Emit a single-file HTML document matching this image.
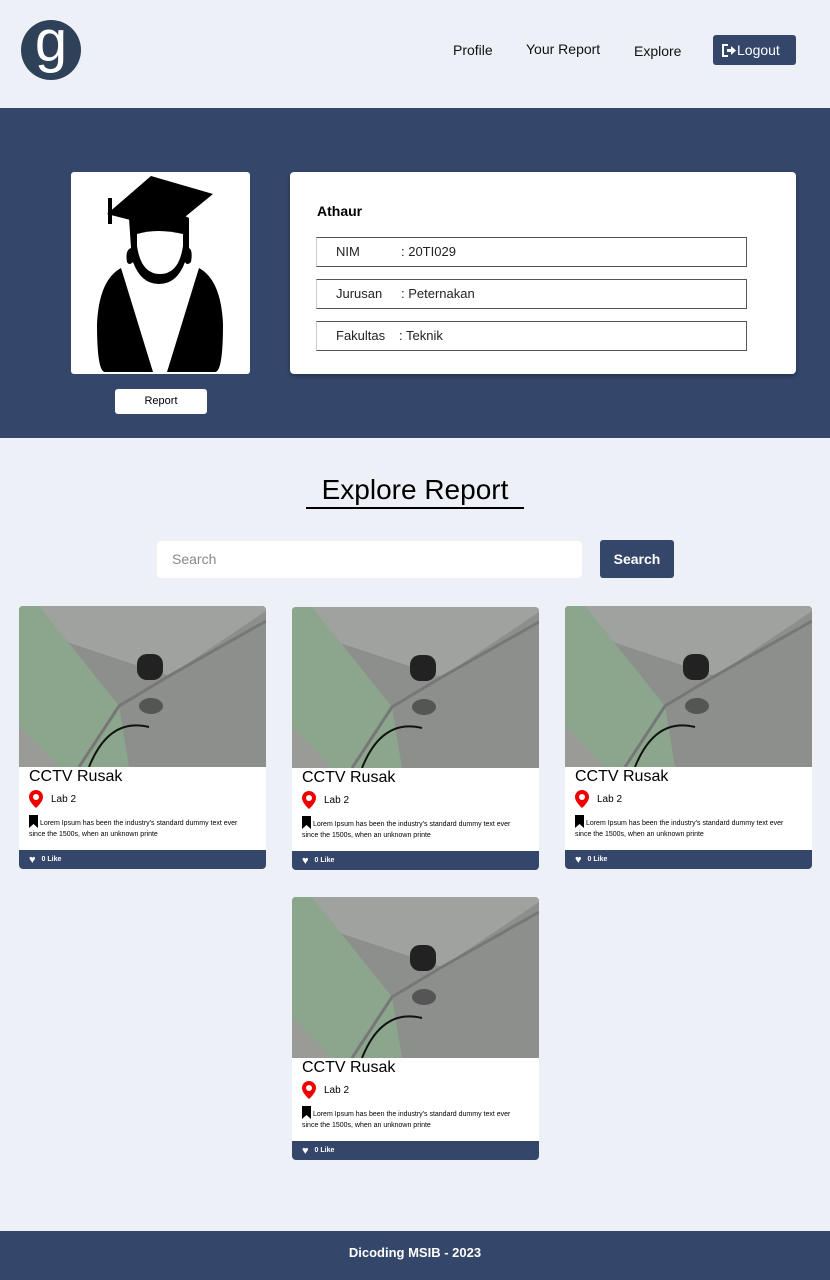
<!DOCTYPE html>
<html><head><meta charset="utf-8"><style>
*{box-sizing:border-box;margin:0;padding:0}
body{width:830px;height:1280px;background:#edf0f6;font-family:"Liberation Sans",sans-serif;position:relative;overflow:hidden;color:#000}
.abs{position:absolute}
.nav a{position:absolute;font-size:14px;color:#111;top:42px}
.card{position:absolute;width:247px;height:263px;background:#fff;border-radius:4px;overflow:hidden}
.card .img{height:161px;display:block}
.card h3{position:absolute;left:10px;top:162px;font-size:16px;font-weight:normal}
.card .loc{position:absolute;left:10px;top:184px;font-size:10px;display:flex;align-items:center;gap:8px}
.card .desc{position:absolute;left:10px;top:209px;font-size:7px;line-height:11px;width:222px}
.card .foot{position:absolute;left:0;bottom:0;width:100%;height:19px;background:#34466a;color:#fff;font-size:7px;font-weight:bold;display:flex;align-items:center;padding-left:10px;gap:6px}
.field{position:absolute;left:316px;width:431px;height:30px;border:1px solid #555;border-left:1px solid #ccc;font-size:13px;color:#222;line-height:28px}
</style></head><body>
<div class="abs" style="left:21px;top:20px;width:60px;height:60px;border-radius:50%;background:#2f4159;color:#fff;font-size:58px;text-align:center;line-height:44px">g</div>
<div class="nav"><a style="left:453px">Profile</a><a style="left:526px;top:41px">Your Report</a><a style="left:634px;top:43px">Explore</a></div>
<div class="abs" style="left:713px;top:35px;width:83px;height:30px;background:#34466a;border-radius:3px;color:#fff;font-size:14px;line-height:30px;padding-left:9px">
<svg width="15" height="13" viewBox="0 0 15 13" style="vertical-align:-2px"><path d="M6 1H1v11h5" stroke="#fff" stroke-width="2" fill="none"/><path d="M5 5h4V2l5 4.5-5 4.5V8H5z" fill="#fff"/></svg>Logout</div>

<div class="abs" style="left:0;top:108px;width:830px;height:330px;background:#34466a"></div>
<div class="abs" style="left:71px;top:172px;width:179px;height:202px;background:#fff;border-radius:3px">
<svg width="179" height="202" viewBox="0 0 179 202">
<path d="M36 42L80 4 142 22 98 58z" fill="#000"/><rect x="37" y="26" width="4" height="26" fill="#000"/>
<path d="M58 46q30-16 60 0v30q4 2 2 14q-4 4-6 0q-8 22-26 22q-18 0-26-22q-4 4-6 0q-2-12 4-14z" fill="#000"/>
<path d="M66 62q20-6 46 0v12q-4 28-23 28q-19 0-23-28z" fill="#fff"/>
<path d="M50 96q-22 12-24 56 0 48 8 48h110q8 0 8-48q-2-44-24-56l-32 104h-14z" fill="#000"/>
</svg></div>
<div class="abs" style="left:115px;top:389px;width:92px;height:25px;background:#fff;border-radius:3px;font-size:11px;text-align:center;line-height:25px">Report</div>
<div class="abs" style="left:290px;top:172px;width:506px;height:202px;background:#fff;border-radius:4px;box-shadow:0 2px 4px rgba(0,0,0,.3)"></div>
<div class="abs" style="left:317px;top:203px;font-size:14px;font-weight:bold">Athaur</div>
<div class="field" style="top:237px"><span style="margin-left:19px">NIM</span><span class="abs" style="left:84px">: 20TI029</span></div>
<div class="field" style="top:279px"><span style="margin-left:19px">Jurusan</span><span class="abs" style="left:84px">: Peternakan</span></div>
<div class="field" style="top:321px"><span style="margin-left:19px">Fakultas</span><span class="abs" style="left:82px">: Teknik</span></div>

<div class="abs" style="left:0;top:474px;width:830px;text-align:center;font-size:28px">Explore Report</div>
<div class="abs" style="left:306px;top:507px;width:218px;height:2px;background:#000"></div>
<div class="abs" style="left:157px;top:541px;width:425px;height:37px;background:#fff;border-radius:4px;font-size:14px;color:#888;line-height:37px;padding-left:15px">Search</div>
<div class="abs" style="left:600px;top:540px;width:74px;height:38px;background:#34466a;border-radius:3px;color:#fff;font-size:14px;font-weight:bold;text-align:center;line-height:38px">Search</div>

<svg width="0" height="0" style="position:absolute"><defs>
<g id="im"><rect width="247" height="161" fill="#8d8f8c"/><path d="M0 0H247V5L150 70 0 20z" fill="#a0a2a0"/>
<path d="M0 0H20L100 100 110 161H0z" fill="#8ca58d"/><path d="M0 120L40 161H0z" fill="#9a9a96"/>
<path d="M60 161L100 100 150 70 247 15" stroke="#777" stroke-width="3" fill="none"/>
<rect x="118" y="48" width="26" height="26" rx="10" fill="#222"/><ellipse cx="132" cy="100" rx="12" ry="8" fill="#555"/>
<path d="M70 161q20-50 60-40" stroke="#111" stroke-width="2" fill="none"/></g>
<g id="pin"><path d="M7 0a7 7 0 0 1 7 7c0 5-7 11-7 11S0 12 0 7a7 7 0 0 1 7-7z" fill="#e00"/><circle cx="7" cy="7" r="3" fill="#fff"/></g>
</defs></svg>

<div class="card" style="left:19px;top:606px"><svg class="img" width="247" height="161"><use href="#im"/></svg><h3>CCTV Rusak</h3><div class="loc"><svg width="14" height="18"><use href="#pin"/></svg>Lab 2</div><div class="desc"><svg width="9" height="13" style="vertical-align:-3px"><path d="M0 0h9v13l-4.5-4L0 13z"/></svg> Lorem Ipsum has been the industry's standard dummy text ever since the 1500s, when an unknown printe</div><div class="foot"><span style="font-size:11px">♥</span>0 Like</div></div>
<div class="card" style="left:292px;top:607px"><svg class="img" width="247" height="161"><use href="#im"/></svg><h3>CCTV Rusak</h3><div class="loc"><svg width="14" height="18"><use href="#pin"/></svg>Lab 2</div><div class="desc"><svg width="9" height="13" style="vertical-align:-3px"><path d="M0 0h9v13l-4.5-4L0 13z"/></svg> Lorem Ipsum has been the industry's standard dummy text ever since the 1500s, when an unknown printe</div><div class="foot"><span style="font-size:11px">♥</span>0 Like</div></div>
<div class="card" style="left:565px;top:606px"><svg class="img" width="247" height="161"><use href="#im"/></svg><h3>CCTV Rusak</h3><div class="loc"><svg width="14" height="18"><use href="#pin"/></svg>Lab 2</div><div class="desc"><svg width="9" height="13" style="vertical-align:-3px"><path d="M0 0h9v13l-4.5-4L0 13z"/></svg> Lorem Ipsum has been the industry's standard dummy text ever since the 1500s, when an unknown printe</div><div class="foot"><span style="font-size:11px">♥</span>0 Like</div></div>
<div class="card" style="left:292px;top:897px"><svg class="img" width="247" height="161"><use href="#im"/></svg><h3>CCTV Rusak</h3><div class="loc"><svg width="14" height="18"><use href="#pin"/></svg>Lab 2</div><div class="desc"><svg width="9" height="13" style="vertical-align:-3px"><path d="M0 0h9v13l-4.5-4L0 13z"/></svg> Lorem Ipsum has been the industry's standard dummy text ever since the 1500s, when an unknown printe</div><div class="foot"><span style="font-size:11px">♥</span>0 Like</div></div>

<div class="abs" style="left:0;top:1231px;width:830px;height:49px;background:#34466a;color:#fff;font-size:13px;font-weight:bold;text-align:center;line-height:44px">Dicoding MSIB - 2023</div>
</body></html>
